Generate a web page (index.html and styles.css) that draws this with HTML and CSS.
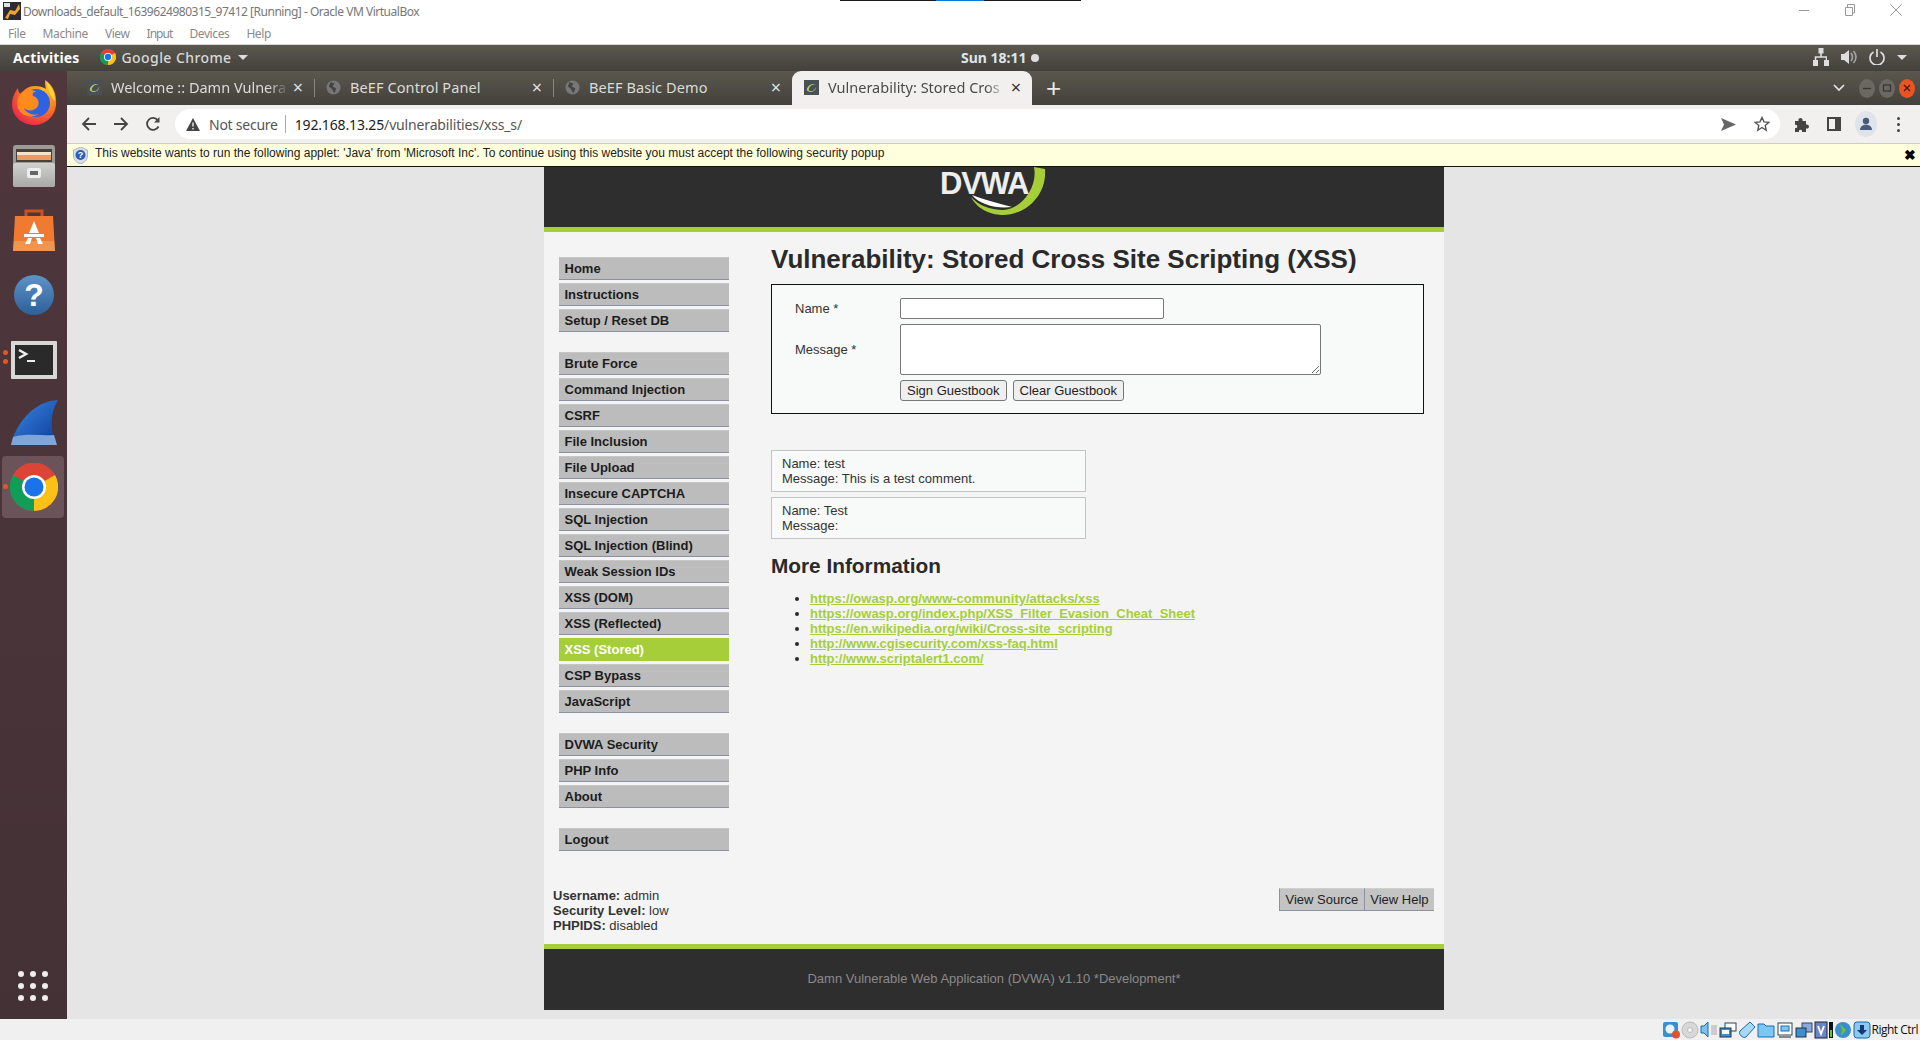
FILE: index.html
```html
<!DOCTYPE html>
<html lang="en">
<head>
<meta charset="utf-8">
<title>Oracle VM VirtualBox</title>
<link rel="stylesheet" href="styles.css">
</head>
<body>
<div class="mini-toolbar"><span class="mini-blue"></span></div>
<header class="vb-title">
  <svg class="vb-logo" viewBox="0 0 18 18" width="18" height="18"><rect width="18" height="18" fill="#2b2b33"/><path d="M2 16 L7 8 L12 9 L16 2 L17 7 L12 13 L7 12 L5 17Z" fill="#f0a030"/><rect x="1" y="1" width="6" height="4" fill="#ddd"/></svg>
  <span class="vb-title-text">Downloads_default_1639624980315_97412 [Running] - Oracle VM VirtualBox</span>
  <div class="win-controls">
    <svg width="12" height="12" viewBox="0 0 12 12"><path d="M1 6.5H11" stroke="#999" fill="none"/></svg>
    <svg width="12" height="12" viewBox="0 0 12 12"><path d="M1.5 3.5H8.5V11.5H1.5ZM3.5 3.5V.5H10.5V9H8.5" stroke="#999" fill="none"/></svg>
    <svg width="12" height="12" viewBox="0 0 12 12"><path d="M.5.5L11.5 11.5M11.5.5L.5 11.5" stroke="#999" fill="none"/></svg>
  </div>
</header>
<nav class="vb-menu"><span>File</span><span>Machine</span><span>View</span><span class="menu-input">Input</span><span>Devices</span><span>Help</span></nav>

<div class="gnome-bar">
  <span class="activities">Activities</span>
  <span class="app-menu">
    <svg width="16" height="16" viewBox="0 0 48 48"><use href="#chrome-logo"/></svg>
    <span>Google Chrome</span><i class="caret"></i>
  </span>
  <span class="clock">Sun 18:11 <i class="clock-dot"></i></span>
  <span class="tray">
    <svg width="16" height="18" viewBox="0 0 16 18"><path d="M5.500 0h5v5.500h-1.700v2.700H14V12h2v6h-5v-6h1.700V9.800H3.300V12H5v6H0v-6h1.700V8.200h5.500V5.500H5.500z" fill="#ddd"/></svg>
    <svg width="16" height="16" viewBox="0 0 16 16"><path d="M0 5h3l5-4v14l-5-4H0z" fill="#ddd"/><path d="M10 4q3 4 0 8M12.500 2q5 6 0 12" stroke="#aaa" stroke-width="1.500" fill="none"/></svg>
    <svg width="16" height="16" viewBox="0 0 16 16"><path d="M4.500 3a7 7 0 1 0 7 0M8 0v8" stroke="#ddd" stroke-width="1.700" fill="none"/></svg>
    <i class="caret"></i>
  </span>
</div>

<div class="workspace">
  <aside class="dock">
    <div class="dock-item">
      <svg width="48" height="48" viewBox="0 0 48 48"><defs><radialGradient id="ff" cx="70%" cy="25%" r="85%"><stop offset="0" stop-color="#ffc22e"/><stop offset=".5" stop-color="#ff7a1e"/><stop offset="1" stop-color="#e4234f"/></radialGradient></defs><path d="M35 1c8 5 12 14 11 25C45 38 35 46 24 46 12 46 2 37 2 26 2 18 5 13 8 9c0 3 1 5 3 6 3-5 8-8 14-8 4 0 8 1 11 3-1-3-1-6-1-9z" fill="url(#ff)"/><circle cx="26" cy="24" r="14" fill="#2f62de"/><path d="M36 2c6 5 9 12 9 20-3-3-7-9-9-20z" fill="#ffd53a"/><path d="M9 17c3-7 13-8 17-4-3 0-4 2-3 4 4 1 7 5 5 10-3 5-10 6-14 2 2 5 9 8 15 6-7 5-18 2-21-6-1-4-1-8 1-12z" fill="#ff8a1e"/></svg>
    </div>
    <div class="dock-item">
      <svg width="48" height="48" viewBox="0 0 48 48"><defs><linearGradient id="fl" x1="0" y1="0" x2="0" y2="1"><stop offset="0" stop-color="#d0d0ce"/><stop offset="1" stop-color="#a8a8a5"/></linearGradient></defs><rect x="3" y="2" width="42" height="42" rx="3" fill="#9b9b98"/><rect x="6" y="6" width="36" height="13" fill="#4a403a"/><rect x="7" y="9" width="34" height="3" fill="#f6e0c8"/><rect x="7" y="12" width="34" height="5" fill="#ee9a5a"/><rect x="3" y="20" width="42" height="24" rx="2" fill="url(#fl)"/><rect x="17" y="25" width="14" height="10" rx="2" fill="#eee"/><rect x="20" y="28" width="8" height="4" fill="#666"/></svg>
    </div>
    <div class="dock-item">
      <svg width="48" height="48" viewBox="0 0 48 48"><path d="M16 10V4h16v6" fill="none" stroke="#c9521f" stroke-width="3"/><path d="M5 9h38l2 35H3z" fill="#ef7a30"/><path d="M4 34h40l1 10H3z" fill="#f09550"/><path d="M24 14l5 12h-10zM14 27h20v3H14zM18 31l-3 6h5l2-6zM30 31l3 6h-5l-2-6z" fill="#fff"/></svg>
    </div>
    <div class="dock-item">
      <svg width="48" height="48" viewBox="0 0 48 48"><defs><linearGradient id="hb" x1="0" y1="0" x2="0" y2="1"><stop offset="0" stop-color="#5d94c8"/><stop offset="1" stop-color="#2d5f98"/></linearGradient></defs><circle cx="24" cy="24" r="20" fill="url(#hb)"/><text class="help-mark" x="24" y="35" text-anchor="middle">?</text></svg>
    </div>
    <div class="dock-item has-dots">
      <i class="run-dot"></i><i class="run-dot"></i>
      <svg width="48" height="48" viewBox="0 0 48 48"><rect x="1" y="6" width="46" height="38" rx="1" fill="#d7d7d5"/><rect x="5" y="10" width="38" height="30" fill="#2a2a2a"/><path d="M9 15l7 4-7 4" stroke="#eee" stroke-width="2.500" fill="none"/><path d="M17 26h8" stroke="#eee" stroke-width="2"/></svg>
    </div>
    <div class="dock-item">
      <svg width="48" height="48" viewBox="0 0 48 48"><defs><linearGradient id="wf" x1="0" y1="0" x2="1" y2="1"><stop offset="0" stop-color="#3b8ae0"/><stop offset="1" stop-color="#0c3a9c"/></linearGradient></defs><path d="M1 46C6 24 24 2 48 1c-8 13-8 29-2 45z" fill="url(#wf)"/><path d="M3 38c14-4 28-1 41-2l3 10H1z" fill="#7fa6d8"/></svg>
    </div>
    <div class="dock-item dock-active has-dots">
      <i class="run-dot"></i>
      <svg width="48" height="48" viewBox="0 0 48 48">
        <defs><g id="chrome-logo">
          <circle cx="24" cy="24" r="24" fill="#db4437"/>
          <path d="M24 24L45 12A24 24 0 0 1 24 48z" fill="#fbc116"/>
          <path d="M24 24L24 48A24 24 0 0 1 3 12z" fill="#0f9d58"/>
          <path d="M3 12A24 24 0 0 1 45 12H24z" fill="#db4437"/>
          <circle cx="24" cy="24" r="12" fill="#fff"/><circle cx="24" cy="24" r="9.500" fill="#1a73e8"/>
        </g></defs>
        <use href="#chrome-logo"/>
      </svg>
    </div>
    <div class="apps-grid"><i></i><i></i><i></i><i></i><i></i><i></i><i></i><i></i><i></i></div>
  </aside>

  <div class="chrome">
    <div class="tabstrip">
      <div class="tab"><svg class="fav" width="15" height="15" viewBox="0 0 16 16"><rect width="16" height="16" fill="#4a5055"/><path d="M3 11c0-5 6-8 10-6-3-1-8 1-8 6 2 2 7 1 8-4 0 5-6 8-10 4z" fill="#b9d36a"/></svg><span class="tab-title">Welcome :: Damn Vulnera</span><span class="tab-x">×</span></div>
      <div class="tab tab-sep"><svg class="fav" width="15" height="15" viewBox="0 0 16 16"><circle cx="8" cy="8" r="7.500" fill="#777"/><path d="M5 2l4 2-2 3 4 2-2 5-3-5-3-2z" fill="#444"/></svg><span class="tab-title tab-plain">BeEF Control Panel</span><span class="tab-x">×</span></div>
      <div class="tab tab-sep"><svg class="fav" width="15" height="15" viewBox="0 0 16 16"><circle cx="8" cy="8" r="7.500" fill="#777"/><path d="M5 2l4 2-2 3 4 2-2 5-3-5-3-2z" fill="#444"/></svg><span class="tab-title tab-plain">BeEF Basic Demo</span><span class="tab-x">×</span></div>
      <div class="tab tab-active"><svg class="fav" width="15" height="15" viewBox="0 0 16 16"><rect width="16" height="16" fill="#4a5055"/><path d="M3 11c0-5 6-8 10-6-3-1-8 1-8 6 2 2 7 1 8-4 0 5-6 8-10 4z" fill="#b9d36a"/></svg><span class="tab-title">Vulnerability: Stored Cros</span><span class="tab-x">×</span></div>
      <span class="tab-plus">+</span>
      <span class="strip-right">
        <svg width="12" height="8" viewBox="0 0 12 8"><path d="M1 1l5 5 5-5" stroke="#e4e4e4" stroke-width="1.700" fill="none"/></svg>
        <span class="wm-btns">
          <i class="wm"><svg width="10" height="10" viewBox="0 0 10 10"><path d="M1 5.500H9" stroke="#333" stroke-width="1.300"/></svg></i>
          <i class="wm"><svg width="10" height="10" viewBox="0 0 10 10"><rect x="1.500" y="2" width="7" height="6" stroke="#333" stroke-width="1.200" fill="none"/></svg></i>
          <i class="wm wm-close"><svg width="10" height="10" viewBox="0 0 10 10"><path d="M2 2l6 6M8 2l-6 6" stroke="#4a1a08" stroke-width="1.300"/></svg></i>
        </span>
      </span>
    </div>

    <div class="toolbar">
      <svg class="tb-ic" width="16" height="16" viewBox="0 0 16 16"><path d="M15 8H2M8 2L2 8l6 6" stroke="#444" stroke-width="1.800" fill="none"/></svg>
      <svg class="tb-ic" width="16" height="16" viewBox="0 0 16 16"><path d="M1 8h13M8 2l6 6-6 6" stroke="#444" stroke-width="1.800" fill="none"/></svg>
      <svg class="tb-ic" width="16" height="16" viewBox="0 0 16 16"><path d="M13.500 10.500A6 6 0 1 1 13 4.500" stroke="#444" stroke-width="1.800" fill="none"/><path d="M14.500 1v5.500H9z" fill="#444"/></svg>
      <div class="omnibox">
        <svg width="14" height="13" viewBox="0 0 14 13"><path d="M7 0l7 13H0z" fill="#444"/><path d="M7 4.500v4M7 10v1.500" stroke="#fff" stroke-width="1.300"/></svg>
        <span class="not-secure">Not secure</span>
        <i class="omni-sep"></i>
        <span class="url">192.168.13.25<span class="url-path">/vulnerabilities/xss_s/</span></span>
        <span class="omni-right">
          <svg width="15" height="15" viewBox="0 0 15 15"><path d="M0 1l15 6.500L0 14l3-6.500z" fill="#666"/></svg>
          <svg width="16" height="16" viewBox="0 0 16 16"><path d="M8 1.500l2 4.400 4.800.5-3.600 3.200 1 4.700L8 11.500l-4.200 2.800 1-4.700L1.200 6.400 6 5.900z" stroke="#555" stroke-width="1.400" fill="none"/></svg>
        </span>
      </div>
      <span class="tb-right">
        <svg width="16" height="16" viewBox="0 0 16 16"><path d="M1 5h3.500c-1-4 5-4 4 0H12v3.500c4-1 4 5 0 4V16H8c1-3-4-3-3 0H1v-4c3 1 3-4 0-3z" fill="#444"/></svg>
        <svg width="14" height="14" viewBox="0 0 14 14"><path d="M0 0h14v14H0zM2 2v10h6V2z" fill="#444" fill-rule="evenodd"/></svg>
        <span class="avatar"><svg width="14" height="14" viewBox="0 0 14 14"><circle cx="7" cy="4" r="3.200" fill="#4a5a78"/><path d="M1 13c0-7 12-7 12 0z" fill="#4a5a78"/></svg></span>
        <span class="kebab"><i></i><i></i><i></i></span>
      </span>
    </div>

    <div class="infobar">
      <svg width="15" height="17" viewBox="0 0 15 17"><path d="M7.500 0l7 3v6c0 4-3 6.500-7 8-4-1.500-7-4-7-8V3z" fill="#d8dde8" stroke="#8a93a8" stroke-width=".6"/><circle cx="7.500" cy="8" r="5" fill="#2b5cb8"/><text class="shield-mark" x="7.500" y="11" text-anchor="middle">?</text></svg>
      <span class="info-text">This website wants to run the following applet: 'Java' from 'Microsoft Inc'. To continue using this website you must accept the following security popup</span>
      <span class="info-close">✖</span>
    </div>

    <main class="viewport">
      <div class="page">
        <div class="dv-header">
          <svg class="dv-logo" width="110" height="60" viewBox="-4 0 110 60">
            <path d="M29 30C36 44 52 48 61 48 82 48 105 30 103 2L92 0C96 20 80 42 61 43 48 43 36 38 29 30Z" fill="#a6ce39"/>
            <path d="M30 28C40 32 55 36 70 40 55 42 38 38 30 28Z" fill="#fff"/>
            <text class="dv-logo-text" x="-2" y="27">DVWA</text>
          </svg>
        </div>
        <div class="dv-body">
          <div class="dv-columns">
            <nav class="side">
              <ul class="side-group"><li>Home</li><li>Instructions</li><li>Setup / Reset DB</li></ul>
              <ul class="side-group"><li>Brute Force</li><li>Command Injection</li><li>CSRF</li><li>File Inclusion</li><li>File Upload</li><li>Insecure CAPTCHA</li><li>SQL Injection</li><li>SQL Injection (Blind)</li><li>Weak Session IDs</li><li>XSS (DOM)</li><li>XSS (Reflected)</li><li class="selected">XSS (Stored)</li><li>CSP Bypass</li><li>JavaScript</li></ul>
              <ul class="side-group"><li>DVWA Security</li><li>PHP Info</li><li>About</li></ul>
              <ul class="side-group"><li>Logout</li></ul>
            </nav>
            <section class="content">
              <h1>Vulnerability: Stored Cross Site Scripting (XSS)</h1>
              <form class="vuln-form">
                <div class="form-grid">
                  <label>Name *</label><input class="in-name" type="text">
                  <label>Message *</label><textarea class="in-msg"></textarea>
                  <span></span><div class="btns"><button type="button">Sign Guestbook</button><button type="button">Clear Guestbook</button></div>
                </div>
              </form>
              <div class="gb-list">
                <div class="gb">Name: test<br>Message: This is a test comment.</div>
                <div class="gb">Name: Test<br>Message:</div>
              </div>
              <h2>More Information</h2>
              <ul class="links">
                <li><a href="#">https://owasp.org/www-community/attacks/xss</a></li>
                <li><a href="#">https://owasp.org/index.php/XSS_Filter_Evasion_Cheat_Sheet</a></li>
                <li><a href="#">https://en.wikipedia.org/wiki/Cross-site_scripting</a></li>
                <li><a href="#">http://www.cgisecurity.com/xss-faq.html</a></li>
                <li><a href="#">http://www.scriptalert1.com/</a></li>
              </ul>
            </section>
          </div>
          <div class="dv-status">
            <div class="status-text"><b>Username:</b> admin<br><b>Security Level:</b> low<br><b>PHPIDS:</b> disabled</div>
            <div class="view-btns"><span>View Source</span><span>View Help</span></div>
          </div>
        </div>
        <footer class="dv-footer">Damn Vulnerable Web Application (DVWA) v1.10 *Development*</footer>
      </div>
    </main>
  </div>
</div>

<footer class="vb-status">
  <span class="vb-icons">
    <svg width="18" height="18" viewBox="0 0 18 18"><rect x="1" y="1" width="15" height="15" rx="2" fill="#3a8fd0"/><circle cx="8" cy="8" r="4.500" fill="#e8f4fc"/><circle cx="14" cy="13.500" r="4" fill="#e8502a"/></svg>
    <svg width="18" height="18" viewBox="0 0 18 18"><circle cx="9" cy="9" r="8" fill="#d8d8d8" stroke="#bbb"/><circle cx="9" cy="9" r="2.500" fill="#f4f4f4" stroke="#bbb"/></svg>
    <svg width="18" height="18" viewBox="0 0 18 18"><path d="M1 5h3l4-4v15l-4-4H1z" fill="#7cc0ec" stroke="#1a6ab0"/><rect x="11" y="4" width="6" height="10" fill="#ccc"/></svg>
    <svg width="18" height="18" viewBox="0 0 18 18"><rect x="6" y="2" width="11" height="8" fill="#fff" stroke="#345"/><rect x="1" y="7" width="11" height="9" fill="#3a8fd0" stroke="#234"/><rect x="3" y="9" width="7" height="4" fill="#fff"/></svg>
    <svg width="18" height="18" viewBox="0 0 18 18"><path d="M12 1l5 5-9 10c-3 2-8-3-6-6z" fill="#a8d8f8" stroke="#1a6ab0"/></svg>
    <svg width="18" height="18" viewBox="0 0 18 18"><path d="M1 3h6l2 2h8v11H1z" fill="#7cc8f4" stroke="#1a6ab0"/></svg>
    <svg width="18" height="18" viewBox="0 0 18 18"><rect x="2" y="2" width="14" height="12" fill="#fff" stroke="#345"/><rect x="5" y="5" width="8" height="5" fill="#7cc8f4" stroke="#1a6ab0"/><path d="M3 16h12" stroke="#888" stroke-width="2"/></svg>
    <svg width="18" height="18" viewBox="0 0 18 18"><rect x="7" y="2" width="10" height="9" fill="#8aa8dc" stroke="#345"/><rect x="1" y="7" width="10" height="9" fill="#3a8fd0" stroke="#234"/></svg>
    <svg class="ic-v" width="14" height="18" viewBox="0 0 14 18"><rect x="1" y="1" width="12" height="16" fill="#6a84c8" stroke="#223"/><path d="M4 5l3 8 3-8" stroke="#fff" stroke-width="1.800" fill="none"/></svg>
    <svg class="ic-bar" width="4" height="16" viewBox="0 0 4 16"><rect width="4" height="16" fill="#111"/><rect x="1" y="8" width="2" height="7" fill="#5bd020"/></svg>
    <svg width="18" height="18" viewBox="0 0 18 18"><circle cx="9" cy="9" r="8" fill="#3a8fd0"/><path d="M6 3l6 6-5 6 1-6z" fill="#70c030"/></svg>
    <svg width="18" height="18" viewBox="0 0 18 18"><rect x="1" y="1" width="16" height="16" rx="3" fill="#8cc8f0" stroke="#1a6ab0"/><path d="M7 4h4v5h3l-5 5-5-5h3z" fill="#123a78"/></svg>
  </span>
  <span class="host-key">Right Ctrl</span>
</footer>
</body>
</html>
```

FILE: styles.css
```css
* { box-sizing: border-box; }
html, body { margin: 0; height: 100%; }
body {
  width: 1920px; height: 1040px; overflow: hidden;
  display: flex; flex-direction: column;
  font-family: "Liberation Sans", Arial, sans-serif;
  background: #fff; position: relative;
}
ul { margin: 0; padding: 0; list-style: none; }
i { display: block; font-style: normal; }

.mini-toolbar { position: absolute; left: 840px; top: 0; width: 241px; height: 1px; background: #1b1b1b; }
.mini-blue { position: absolute; left: 96px; top: 0; width: 48px; height: 1px; background: #0a78d7; }

.vb-title { height: 22px; display: flex; align-items: center; padding-left: 3px; background: #fff; }
.vb-logo { margin-right: 2px; }
.vb-title-text { font: 12px "Noto Sans", sans-serif; color: #777; letter-spacing: -.48px; white-space: nowrap; }
.win-controls { margin-left: auto; display: flex; gap: 34px; padding: 0 18px 2px 0; }
.vb-menu { height: 22px; display: flex; align-items: center; padding-left: 8px; font: 12px "Noto Sans", sans-serif; color: #8a8a8a; background: #fff; }
.vb-menu span { margin-right: 17px; letter-spacing: -.4px; }
.vb-menu .menu-input { letter-spacing: -.95px; }

.gnome-bar {
  height: 27px; display: flex; align-items: center; position: relative; padding: 0 0 2px 13px;
  background: linear-gradient(#5a574e, #42413b); border-top: 1px solid #d8d8d8; color: #e6e6e6;
  font: bold 14px "Noto Sans", sans-serif;
}
.activities { color: #fff; margin-right: 20px; letter-spacing: .15px; }
.app-menu { display: flex; align-items: center; gap: 6px; color: #d8d8d8; font-weight: 500; letter-spacing: .42px; }
.caret { width: 0; height: 0; border: 5px solid transparent; border-top: 5px solid #ddd; border-bottom: 0; }
.clock { position: absolute; left: 961px; top: 3px; display: flex; align-items: center; gap: 4px; font-size: 14px; color: #dde6ee; }
.clock-dot { width: 8px; height: 8px; border-radius: 50%; background: #ddd; }
.tray { margin-left: auto; display: flex; align-items: center; gap: 12px; padding-right: 13px; }

.workspace { flex: 1; display: flex; min-height: 0; }
.dock { width: 67px; background: linear-gradient(#4f373c, #433136); display: flex; flex-direction: column; position: relative; }
.dock-item { height: 64px; display: flex; align-items: center; justify-content: center; position: relative; }
.dock-active::before { content: ""; position: absolute; left: 2px; right: 3px; top: 1px; bottom: 1px; background: #6b5459; border-radius: 4px; }
.dock-item svg { position: relative; }
.run-dot { position: absolute; left: 3px; width: 5px; height: 5px; border-radius: 50%; background: #e95420; }
.has-dots .run-dot:nth-child(1) { top: 23px; }
.has-dots .run-dot:nth-child(2) { top: 32px; }
.dock-active .run-dot:nth-child(1) { top: 29px; z-index: 1; }
.help-mark { font: bold 32px "Liberation Sans", sans-serif; fill: #fff; }
.apps-grid { position: absolute; left: 18px; top: 900px; display: grid; grid-template-columns: repeat(3, 6px); gap: 6px; }
.apps-grid i { width: 6px; height: 6px; border-radius: 50%; background: #eee; }

.chrome { flex: 1; display: flex; flex-direction: column; min-width: 0; }
.tabstrip { height: 34px; display: flex; align-items: stretch; background: linear-gradient(#5a574e, #42413b); padding-left: 8px; }
.tab {
  width: 239px; display: flex; align-items: center; padding: 0 7px 2px 12px; position: relative;
  color: #dcdcd8; font: 14.500px "Noto Sans", sans-serif;
}
.tab-sep::before { content: ""; position: absolute; left: 0; top: 8px; bottom: 8px; width: 1px; background: #8a8880; }
.fav { flex: none; margin-right: 9px; }
.tab-title { flex: 1; overflow: hidden; white-space: nowrap; min-width: 0; -webkit-mask-image: linear-gradient(90deg, #000 88%, transparent); mask-image: linear-gradient(90deg, #000 88%, transparent); }
.tab-plain { -webkit-mask-image: none; mask-image: none; letter-spacing: .1px; }
.tab-x { width: 18px; text-align: center; font-size: 18px; line-height: 1; color: #e0e0e0; }
.tab-active { background: #f1f0ef; color: #4a4a4a; border-radius: 9px 9px 0 0; width: 240px; }
.tab-active .tab-x { color: #333; }
.tab-plus { color: #e8e8e8; font: 26px "Liberation Sans", sans-serif; margin-left: 14px; align-self: center; }
.strip-right { margin-left: auto; display: flex; align-items: center; gap: 14px; padding-right: 5px; }
.wm-btns { display: flex; gap: 4px; }
.wm { width: 16px; height: 19px; border-radius: 50%; background: #6a6860; display: flex; align-items: center; justify-content: center; }
.wm-close { background: #e95420; }

.toolbar { height: 38px; display: flex; align-items: center; background: #f1f0ef; padding-left: 14px; }
.tb-ic { margin-right: 16px; }
.omnibox {
  width: 1605px; height: 30px; margin-left: -2px; background: #fff; border-radius: 15px;
  display: flex; align-items: center; padding-left: 11px; font: 14px "Noto Sans", sans-serif; color: #222;
}
.not-secure { margin-left: 9px; color: #555; letter-spacing: -.25px; }
.omni-sep { width: 1px; height: 18px; background: #aaa; margin: 0 9px 0 7px; }
.url { letter-spacing: -.15px; }
.url-path { color: #555; }
.omni-right { margin-left: auto; display: flex; gap: 18px; padding-right: 10px; align-items: center; }
.tb-right { display: flex; align-items: center; margin-left: 14px; }
.tb-right > svg:first-child { margin-right: 17px; }
.tb-right > svg:nth-child(2) { margin-right: 14px; }
.avatar { width: 22px; height: 26px; border-radius: 50%; background: #dfe3ea; display: flex; align-items: center; justify-content: center; }
.kebab { display: flex; flex-direction: column; gap: 3px; margin-left: 20px; }
.kebab i { width: 3px; height: 3px; border-radius: 50%; background: #444; }

.infobar { height: 24px; display: flex; align-items: center; padding-left: 6px; background: #ffffdd; border-top: 1px solid #ccc; border-bottom: 1px solid #111; }
.info-text { margin-left: 7px; font-size: 12px; color: #222; white-space: nowrap; position: relative; top: -2px; }
.shield-mark { font: bold 9px "Liberation Sans", sans-serif; fill: #fff; }
.info-close { margin-left: auto; padding-right: 4px; font-size: 14px; font-weight: bold; color: #000; }

.viewport { flex: 1; min-height: 0; background: #e5e5e5; display: flex; justify-content: center; padding-left: 1px; }
.page { width: 900px; height: 843px; background: #f4f4f4; display: flex; flex-direction: column; color: #2a2a2a; font-size: 13px; }
.dv-header { height: 65px; background: #2e2e2e; border-bottom: 5px solid #a6ce39; padding-left: 394px; overflow: hidden; }
.dv-logo { display: block; }
.dv-logo-text { font: bold 31px "Liberation Sans", sans-serif; fill: #eee; letter-spacing: -1.200px; }

.dv-body { flex: 1; display: flex; flex-direction: column; position: relative; }
.dv-columns { display: flex; flex: 1; }
.side { width: 227px; padding: 25px 0 0 15px; flex: none; }
.side-group { width: 170px; margin-bottom: 20px; }
.side-group li {
  height: 23px; margin-bottom: 3px; padding-left: 5.500px; line-height: 22px; background: #bcbcbc;
  border-top: 1px solid #c6c6c6; border-bottom: 1px solid #8c90a0; font-weight: bold; color: #1c1c1c;
}
.side-group li.selected { background: #a6ce39; color: #fff; border-color: #a6ce39; }

.content { flex: 1; padding-right: 20px; }
h1 { margin: 14px 0 12px; font-size: 26px; line-height: 26px; font-weight: bold; color: #2a2a2a; }
.vuln-form { height: 130px; border: 1px solid #111; background: #f8f9f9; padding: 13px 0 0 23px; }
.form-grid { display: grid; grid-template-columns: 105px auto; grid-template-rows: 21px 51px 21px; row-gap: 5px; justify-content: start; align-items: center; }
.in-name, .in-msg { display: block; padding: 0; margin: 0; border: 1px solid #777; border-radius: 2px; background: #fff; }
.in-name { width: 264px; height: 21px; }
.in-msg { width: 421px; height: 51px; }
label { color: #333; }
.btns { display: flex; gap: 6px; }
.btns button { height: 21px; padding: 0 6px; font: 13px "Liberation Sans", sans-serif; color: #222; background: #efefef; border: 1px solid #777; border-radius: 3px; }
.gb-list { margin-top: 36px; display: flex; flex-direction: column; gap: 5px; }
.gb { width: 315px; height: 42px; border: 1px solid #c4c4c4; background: #f8f9f9; padding: 5px 10px; line-height: 15px; color: #333; }
h2 { margin: 15px 0 13px; font-size: 20.800px; line-height: 24px; font-weight: bold; color: #2a2a2a; }
.links { list-style: disc; padding-left: 39px; line-height: 15px; }
.links a { color: #a6ce39; font-weight: bold; }

.dv-status { display: flex; justify-content: space-between; align-items: flex-start; padding: 8px 10px 0 9px; height: 64px; }
.status-text { line-height: 15px; color: #333; }
.view-btns { display: flex; }
.view-btns span { height: 23px; padding: 0 5.500px; line-height: 22px; background: #c4c4c4; border-top: 1px solid #d0d0d0; border-bottom: 1px solid #8c90a0; border-left: 1px solid #8c90a0; color: #222; }
.dv-footer { height: 66px; background: #2e2e2e; border-top: 5px solid #a6ce39; color: #8a8a8a; text-align: center; line-height: 60px; font-size: 13px; }

.vb-status { height: 21px; display: flex; align-items: center; justify-content: flex-end; background: #f0f0f0; padding-right: 2px; }
.vb-icons { display: flex; align-items: center; gap: 1px; }
.host-key { font: 12px "Open Sans", sans-serif; letter-spacing: -.5px; color: #111; margin-left: 1px; }
```
